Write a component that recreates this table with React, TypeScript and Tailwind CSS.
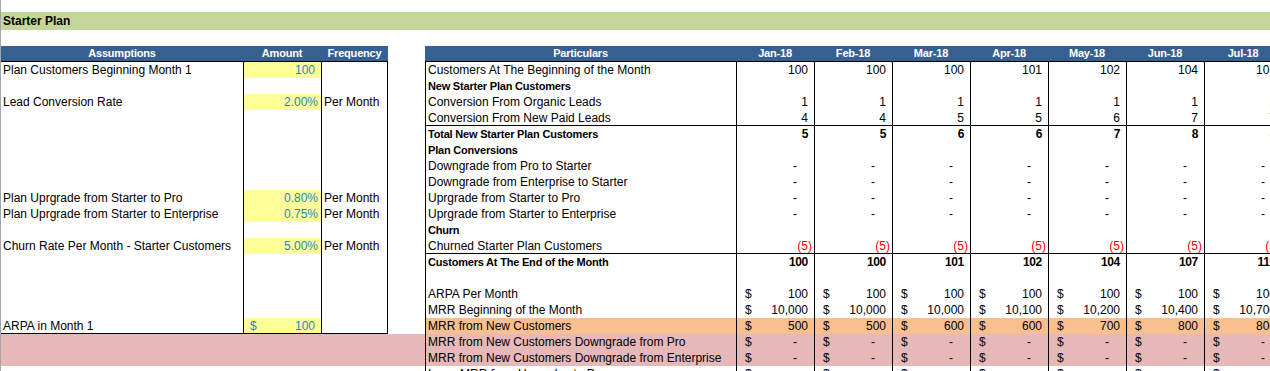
import clsx from "clsx";

const months = ["Jan-18", "Feb-18", "Mar-18", "Apr-18", "May-18", "Jun-18", "Jul-18"];

type LeftRow = {
  label: string;
  amount?: string;
  freq?: string;
  dollar?: boolean;
};

type RightRow = {
  label: string;
  bold?: boolean;
  line?: boolean;
  dollar?: boolean;
  values?: number[];
  fill?: "orange" | "pink";
};

// index = sheet row under the header, null = empty row inside the box
const leftRows: (LeftRow | null)[] = [
  { label: "Plan Customers Beginning Month 1", amount: "100" },
  null,
  { label: "Lead Conversion Rate", amount: "2.00%", freq: "Per Month" },
  null,
  null,
  null,
  null,
  null,
  { label: "Plan Uprgrade from Starter to Pro", amount: "0.80%", freq: "Per Month" },
  { label: "Plan Uprgrade from Starter to Enterprise", amount: "0.75%", freq: "Per Month" },
  null,
  { label: "Churn Rate Per Month - Starter Customers", amount: "5.00%", freq: "Per Month" },
  null,
  null,
  null,
  null,
  { label: "ARPA in Month 1", amount: "100", dollar: true },
];

const dashes = [0, 0, 0, 0, 0, 0, 0];

const rightRows: RightRow[] = [
  { label: "Customers At The Beginning of the Month", values: [100, 100, 100, 101, 102, 104, 107] },
  { label: "New Starter Plan Customers", bold: true },
  { label: "Conversion From Organic Leads", values: [1, 1, 1, 1, 1, 1, 1] },
  { label: "Conversion From New Paid Leads", values: [4, 4, 5, 5, 6, 7, 7], line: true },
  { label: "Total New Starter Plan Customers", bold: true, values: [5, 5, 6, 6, 7, 8, 8] },
  { label: "Plan Conversions", bold: true },
  { label: "Downgrade from Pro to Starter", values: dashes },
  { label: "Downgrade from Enterprise to Starter", values: dashes },
  { label: "Uprgrade from Starter to Pro", values: dashes },
  { label: "Uprgrade from Starter to Enterprise", values: dashes },
  { label: "Churn", bold: true },
  { label: "Churned Starter Plan Customers", values: [-5, -5, -5, -5, -5, -5, -5], line: true },
  { label: "Customers At The End of the Month", bold: true, values: [100, 100, 101, 102, 104, 107, 110] },
  { label: "" },
  { label: "ARPA Per Month", dollar: true, values: [100, 100, 100, 100, 100, 100, 100] },
  {
    label: "MRR Beginning of the Month",
    dollar: true,
    values: [10000, 10000, 10000, 10100, 10200, 10400, 10700],
  },
  {
    label: "MRR from New Customers",
    dollar: true,
    fill: "orange",
    values: [500, 500, 600, 600, 700, 800, 800],
  },
  { label: "MRR from New Customers Downgrade from Pro", dollar: true, fill: "pink", values: dashes },
  {
    label: "MRR from New Customers Downgrade from Enterprise",
    dollar: true,
    fill: "pink",
    values: dashes,
  },
  { label: "Less: MRR from Upgrades to Pro", dollar: true, values: dashes },
];

const boldText = "font-bold text-[11px] tracking-[-0.2px]";

function ValueCell({
  value,
  dollar,
  bold,
}: {
  value?: number;
  dollar?: boolean;
  bold?: boolean;
}) {
  let content = null;

  if (value === 0) {
    content = <span className="pr-[17px]">-</span>;
  } else if (value !== undefined && value < 0) {
    content = <span className="pr-[2px] text-[#ff0000]">({Math.abs(value)})</span>;
  } else if (value !== undefined) {
    content = (
      <span className={clsx("pr-[6px]", bold && "font-bold tracking-[-0.3px]")}>
        {value.toLocaleString("en-US")}
      </span>
    );
  }

  return (
    <div className="flex w-[78px] shrink-0 justify-between border-l border-black">
      <span className="pl-[8px]">{value !== undefined && dollar ? "$" : ""}</span>
      {content}
    </div>
  );
}

function LeftCells({ row, last }: { row: LeftRow | null; last: boolean }) {
  return (
    <>
      <div
        className={clsx(
          "w-[242px] shrink-0 truncate pl-[2px]",
          last && "border-b border-black",
        )}
      >
        {row?.label}
      </div>
      <div
        className={clsx(
          "flex w-[78px] shrink-0 justify-between border-l border-black text-[#1f86c8]",
          row?.amount && "bg-[#ffff99]",
          last && "border-b",
        )}
      >
        <span className="pl-[6px]">{row?.dollar ? "$" : ""}</span>
        <span className={row?.amount?.endsWith("%") ? "pr-[3px]" : "pr-[6px]"}>
          {row?.amount}
        </span>
      </div>
      <div
        className={clsx(
          "w-[67px] shrink-0 border-x border-black pl-[2px]",
          last && "border-b",
        )}
      >
        {row?.freq}
      </div>
    </>
  );
}

export default function App() {
  return (
    <div className="h-[371px] w-[1270px] overflow-hidden border-l border-[#a6a6a6] bg-white font-['Liberation_Sans',Arial,sans-serif] text-[12px] leading-4 text-black">
      <div className="h-3" />

      <div className="h-[18px] bg-[#c4d79b] pl-[2px] text-[12px] font-bold leading-[18px]">
        Starter Plan
      </div>

      <div className="h-4" />

      {/* header row */}
      <div className="flex h-4 leading-[15px] text-white">
        <div className={clsx("flex w-[387px] shrink-0 border-b border-black bg-[#366092]", boldText)}>
          <div className="w-[242px] text-center">Assumptions</div>
          <div className="w-[78px] text-center">Amount</div>
          <div className="w-[67px] text-center">Frequency</div>
        </div>
        <div className="w-[37px] shrink-0" />
        <div className={clsx("flex flex-1 border-b border-black bg-[#366092]", boldText)}>
          <div className="w-[311px] shrink-0 text-center">Particulars</div>
          {months.map((m) => (
            <div key={m} className="w-[78px] shrink-0 text-center">
              {m}
            </div>
          ))}
        </div>
      </div>

      {/* body rows */}
      {rightRows.map((r, i) => (
        <div
          key={i}
          className={clsx("flex h-4", r.fill === "pink" && "bg-[#e6b8b7]")}
        >
          {i < leftRows.length ? (
            <LeftCells row={leftRows[i]} last={i === leftRows.length - 1} />
          ) : (
            <div className="w-[387px] shrink-0" />
          )}

          <div className="w-[37px] shrink-0" />

          <div
            className={clsx(
              "flex flex-1 border-l border-black",
              r.fill === "orange" && "bg-[#fabf8f]",
              r.line && "border-b",
            )}
          >
            <div className={clsx("w-[310px] shrink-0 truncate pl-[2px]", r.bold && boldText)}>
              {r.label}
            </div>
            {months.map((m, j) => (
              <ValueCell
                key={m}
                value={r.values?.[j]}
                dollar={r.dollar}
                bold={r.bold}
              />
            ))}
          </div>
        </div>
      ))}
    </div>
  );
}
